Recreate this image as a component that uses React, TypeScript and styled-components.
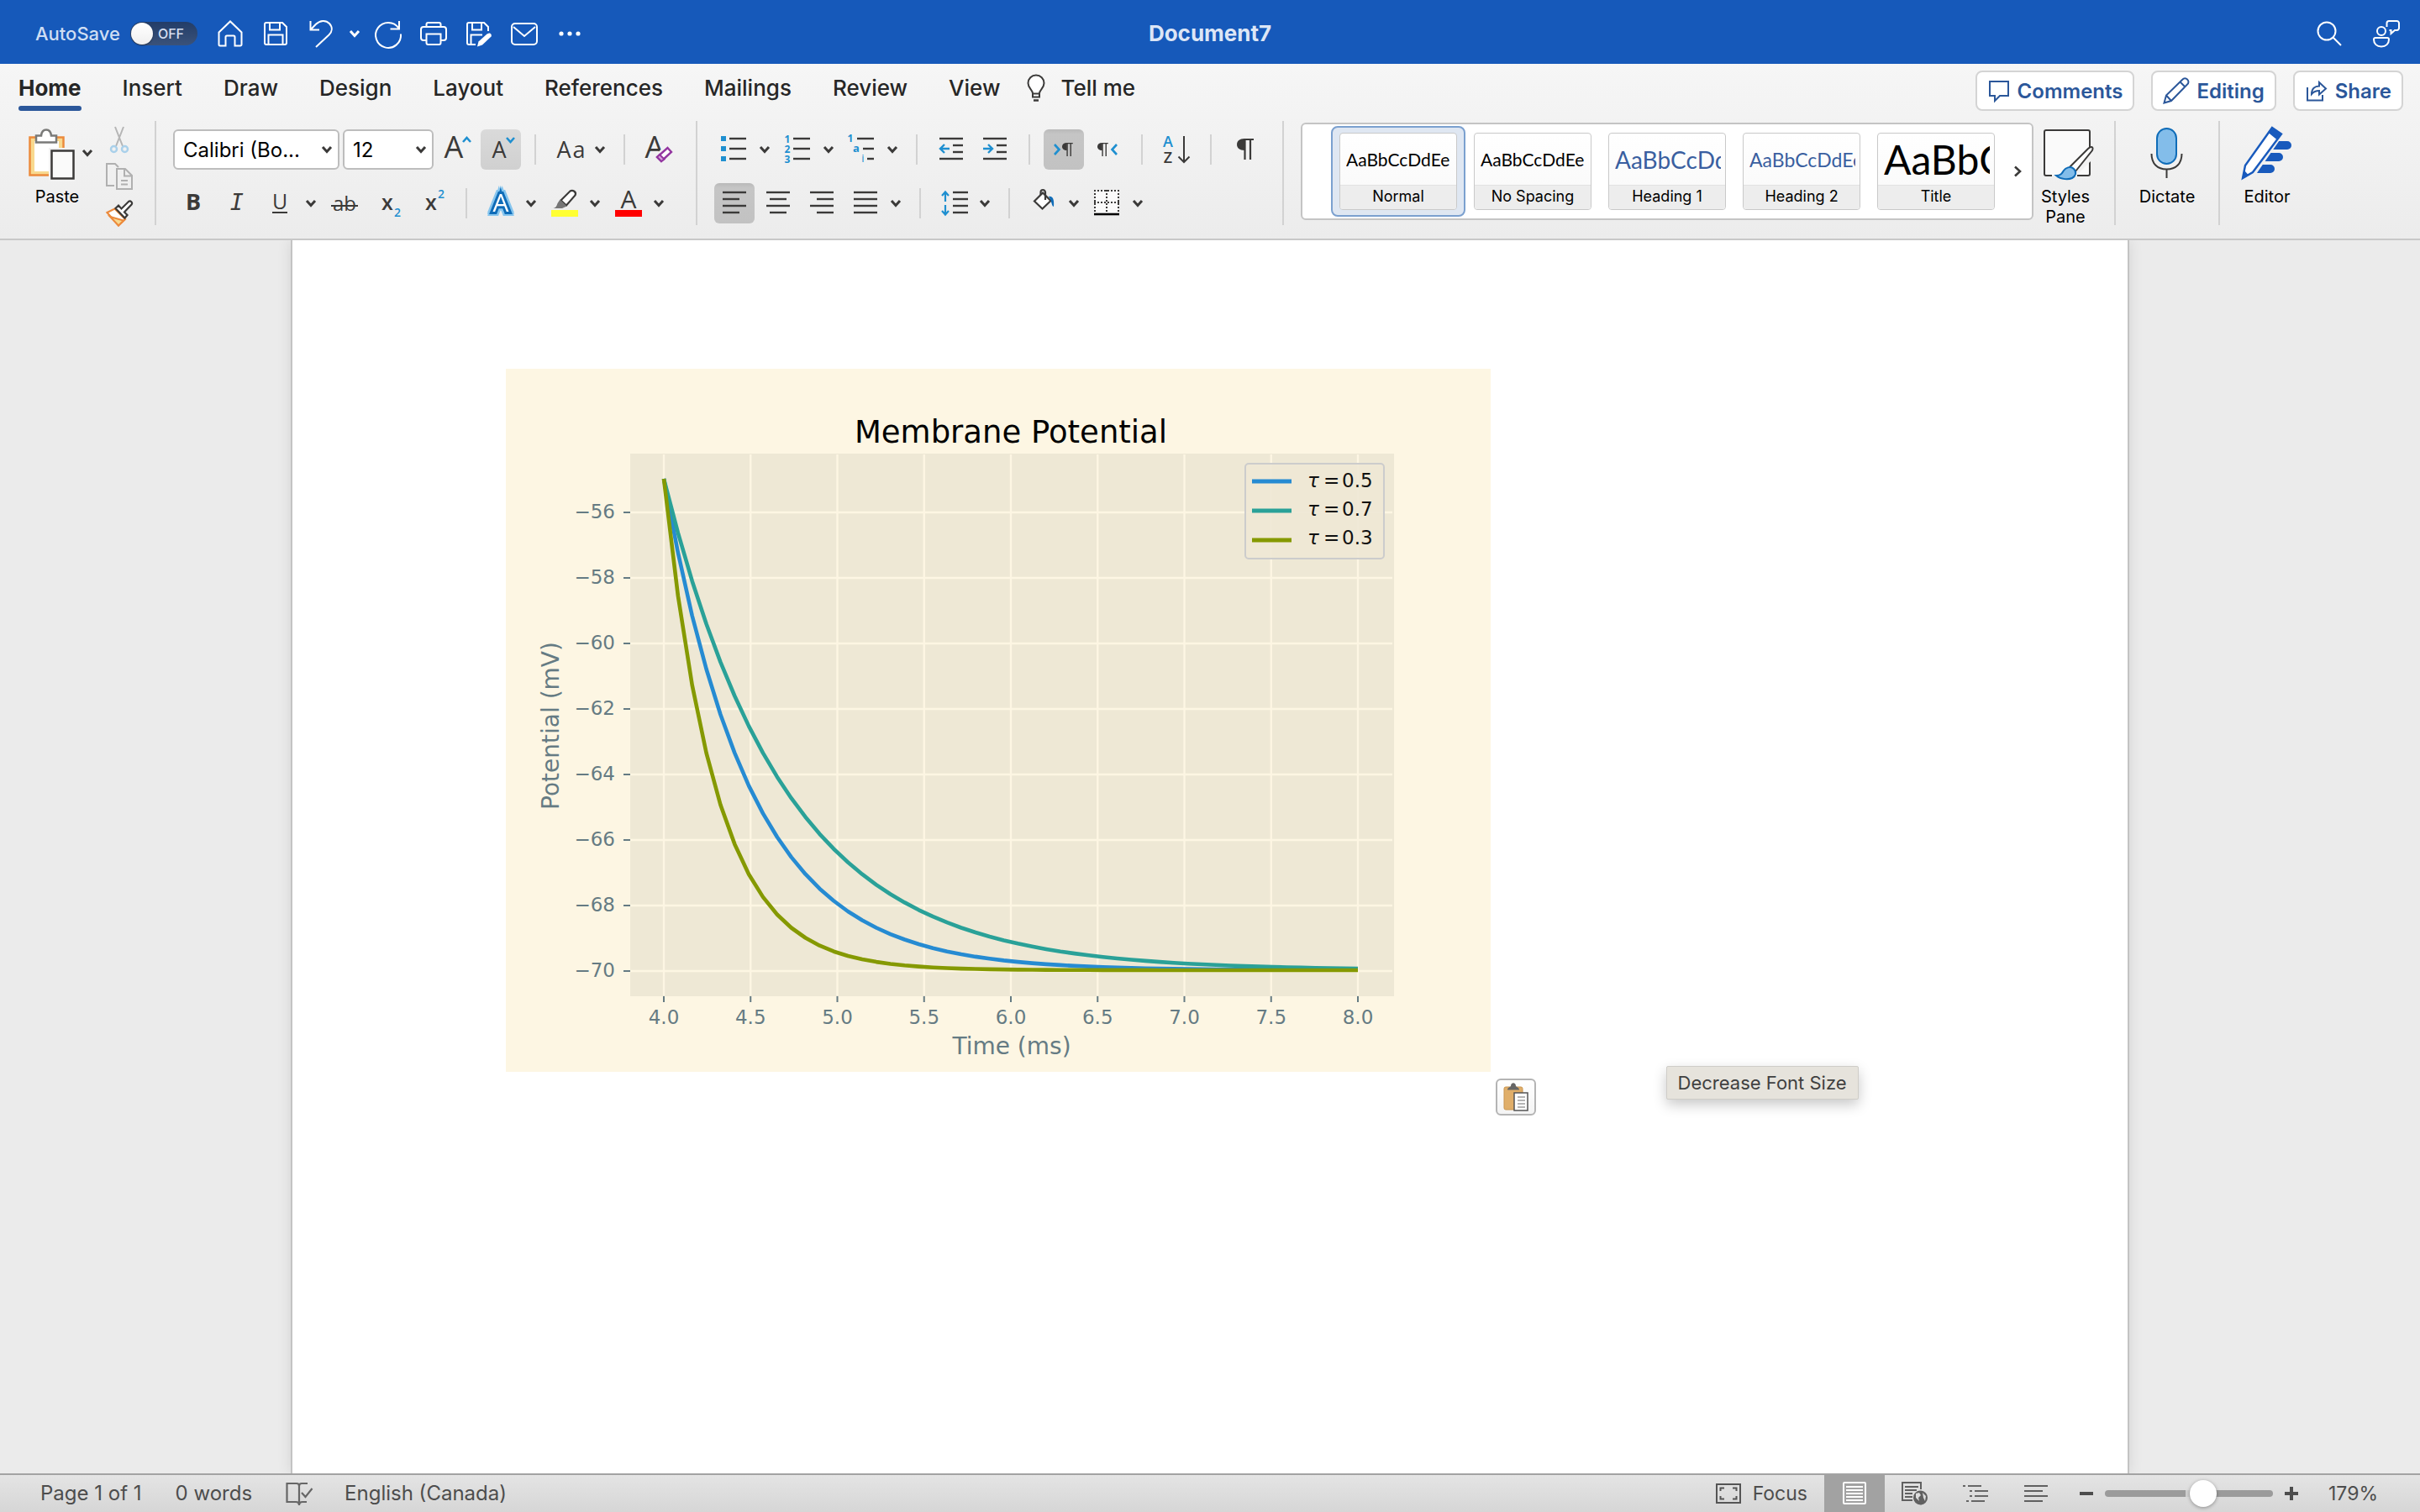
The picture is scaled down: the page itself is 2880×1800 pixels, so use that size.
import React from "react";
import styled, { createGlobalStyle, css } from "styled-components";

const UI = `Inter, "Liberation Sans", sans-serif`;
const INK = "#3b3a39";
const BLUE = "#1e8fd0";
const WORD = "#2b579a";

const GlobalStyle = createGlobalStyle`
  *, *::before, *::after { box-sizing: border-box; }
  body { margin: 0; background: #ebebeb; font-family: ${UI}; }
  button, select, input { font: inherit; color: inherit; }
  svg { display: block; flex: none; overflow: visible; }
  svg text { font-family: "Open Sans", "Noto Sans", sans-serif; }
`;

/* ---------- shell ---------- */

const Window = styled.div`
  display: flex;
  flex-direction: column;
  height: 100vh;
  overflow: hidden;
`;

const TitleBar = styled.header`
  display: grid;
  grid-template-columns: 1fr auto 1fr;
  align-items: center;
  flex: none;
  height: 76px;
  padding: 4px 6px 0;
  background: #1659ba;
  color: #fff;
`;

const BarSide = styled.div<{ $end?: boolean }>`
  display: flex;
  align-items: center;
  justify-content: ${(p) => (p.$end ? "flex-end" : "flex-start")};
`;

const DocTitle = styled.h1`
  margin: 0;
  font-size: 26px;
  font-weight: 700;
  line-height: 32px;
  color: #dce6f6;
`;

const AutoSave = styled.label`
  display: flex;
  align-items: center;
  gap: 12px;
  margin: 0 12px 0 36px;
  font-size: 22px;
  font-weight: 500;
  color: #cfdef3;
`;

const Track = styled.span`
  display: flex;
  align-items: center;
  gap: 6px;
  width: 80px;
  height: 28px;
  padding: 1px;
  border-radius: 14px;
  background: linear-gradient(#233d68, #3a527a);
  font-size: 16px;
  color: #d5dff0;
`;

const Knob = styled.input`
  appearance: none;
  width: 26px;
  height: 26px;
  margin: 0;
  border-radius: 50%;
  background: linear-gradient(#fff, #f0f0f0);
  box-shadow: 0 1px 2px rgba(0, 0, 0, 0.4);
`;

const BarButton = styled.button<{ $size?: "narrow" | "wide" }>`
  display: flex;
  align-items: center;
  justify-content: center;
  width: ${(p) => (p.$size === "narrow" ? 26 : p.$size === "wide" ? 68 : 54)}px;
  height: 40px;
  padding: 0;
  border: 0;
  background: none;
`;

const Ribbon = styled.section`
  flex: none;
  border-bottom: 2px solid #c8c8c8;
  background: linear-gradient(#f6f6f6, #ececec);
`;

const TabRow = styled.div`
  display: flex;
  align-items: flex-start;
  justify-content: space-between;
  height: 68px;
  padding: 8px 20px 0 22px;
`;

const TabBar = styled.div`
  display: flex;
  gap: 32px;
`;

const Tabs = styled.nav`
  display: flex;
  gap: 49px;
`;

const Tab = styled.button<{ $active?: boolean }>`
  display: flex;
  align-items: center;
  gap: 18px;
  height: 48px;
  padding: 0;
  border: 0;
  border-bottom: 6px solid transparent;
  background: none;
  font-size: 26px;
  line-height: 32px;
  font-weight: 500;
  color: #262626;
  white-space: nowrap;
  ${(p) =>
    p.$active &&
    css`
      font-weight: 700;
      position: relative;
      &::after {
        content: "";
        position: absolute;
        inset: 42px 0 auto;
        height: 6px;
        border-radius: 3px;
        background: ${WORD};
      }
    `}
`;

const Actions = styled.div`
  display: flex;
  gap: 20px;
`;

const Action = styled.button`
  display: flex;
  align-items: center;
  gap: 8px;
  height: 48px;
  padding: 0 12px;
  border: 2px solid #d4d4d4;
  border-radius: 8px;
  background: #fff;
  font-size: 24px;
  font-weight: 600;
  color: ${WORD};
`;

const Groups = styled.div`
  display: flex;
  align-items: flex-start;
  padding-bottom: 12px;
  min-height: 140px;
`;

const GroupLine = styled.div`
  flex: none;
  width: 2px;
  height: 124px;
  background: #d2d2d2;
`;

const Clipboard = styled.div`
  display: flex;
  padding: 6px 26px 0 34px;
`;

const PasteStack = styled.div`
  width: 92px;
`;

const PasteRow = styled.div`
  display: flex;
  align-items: center;
  margin-bottom: 8px;
`;

const PasteLabel = styled.span`
  display: block;
  width: 68px;
  font-size: 20px;
  line-height: 24px;
  text-align: center;
`;

const SmallStack = styled.div`
  display: flex;
  flex-direction: column;
  gap: 12px;
`;

const Plain = styled.button`
  display: block;
  padding: 0;
  border: 0;
  background: none;
`;

const Group = styled.div`
  display: flex;
  flex-direction: column;
  gap: 16px;
  padding: 10px 20px 0;
`;

const Row = styled.div`
  display: flex;
  align-items: center;
  gap: 4px;
  height: 48px;
`;

const Split = styled.div`
  display: flex;
`;

const ToolLine = styled.div`
  width: 2px;
  height: 36px;
  margin: 0 12px;
  background: #d2d2d2;
`;

const Tool = styled.button<{ $on?: "soft" | "strong" }>`
  width: 48px;
  height: 48px;
  padding: 0;
  border: 0;
  border-radius: 6px;
  background: ${(p) =>
    p.$on === "strong"
      ? "linear-gradient(#b9b9b9, #c5c5c5 12%, #c2c2c2)"
      : p.$on === "soft"
        ? "linear-gradient(#dadada, #d0d0d0)"
        : "none"};
`;

const ChevronButton = styled.button`
  display: flex;
  align-items: center;
  justify-content: center;
  width: 24px;
  height: 48px;
  padding: 0;
  border: 0;
  background: none;
`;

const SelectBox = styled.label<{ $wide?: boolean }>`
  display: flex;
  align-items: center;
  width: ${(p) => (p.$wide ? 198 : 108)}px;
  height: 48px;
  padding-right: 7px;
  border: 2px solid #bdbdbd;
  border-radius: 6px;
  background: #fff;
`;

const Select = styled.select`
  appearance: none;
  flex: 1;
  min-width: 0;
  height: 100%;
  padding: 0 0 0 10px;
  border: 0;
  background: none;
  font-size: 24px;
  color: #000;
`;

const Gallery = styled.div`
  display: flex;
  height: 116px;
  margin: 2px 0 0 20px;
  padding: 2px 0 2px 34px;
  border: 2px solid #c4c4c4;
  border-radius: 6px;
  background: #fff;
`;

const StyleCell = styled.button<{ $on?: boolean }>`
  width: 160px;
  height: 108px;
  padding: 6px 8px;
  border: 2px solid ${(p) => (p.$on ? "#7ba0cf" : "transparent")};
  border-radius: 8px;
  background: ${(p) => (p.$on ? "#dfe7f2" : "none")};
`;

const StyleCard = styled.span`
  display: flex;
  flex-direction: column;
  height: 92px;
  border: 1px solid #c9c9c9;
  border-radius: 4px;
  background: linear-gradient(#fff, #f8f8f8);
  overflow: hidden;
`;

const Sample = styled.span<{ $size: number; $blue?: boolean }>`
  display: block;
  height: 62px;
  margin: 0 5px 0 7px;
  overflow: hidden;
  font-family: Lato, "Noto Sans", sans-serif;
  font-size: ${(p) => p.$size}px;
  line-height: 62px;
  text-align: left;
  white-space: nowrap;
  color: ${(p) => (p.$blue ? "#3a5fa0" : "#000")};
`;

const SampleName = styled.span`
  height: 30px;
  border-top: 1px solid #e2e2e2;
  background: #ededed;
  font-size: 18px;
  line-height: 26px;
  color: #000;
`;

const GalleryNext = styled.button`
  display: flex;
  align-items: center;
  justify-content: center;
  width: 34px;
  padding: 0;
  border: 0;
  background: none;
`;

const BigButton = styled.button<{ $w: number; $first?: boolean }>`
  display: flex;
  flex-direction: column;
  align-items: center;
  gap: 8px;
  width: ${(p) => p.$w}px;
  margin: 0 20px 0 ${(p) => (p.$first ? 0 : 20)}px;
  padding: 6px 0 0;
  border: 0;
  background: none;
  font-size: 20px;
  line-height: 24px;
  color: #000;
`;

/* ---------- document ---------- */

const Workspace = styled.main`
  flex: 1;
  min-height: 0;
  display: flex;
  justify-content: center;
  background: #ebebeb;
  overflow: hidden;
`;

const Page = styled.article`
  position: relative;
  width: 76%;
  padding: 153px 254px 0;
  border: solid #c3c3c3;
  border-width: 0 2px;
  background: #fff;
  box-shadow: 0 0 16px rgba(0, 0, 0, 0.1);
`;

const Figure = styled.figure`
  position: relative;
  width: 1172px;
  max-width: 100%;
  margin: 0;
`;

const PasteOptions = styled.button`
  position: absolute;
  left: calc(100% + 6px);
  top: calc(100% + 8px);
  display: flex;
  align-items: center;
  justify-content: center;
  width: 48px;
  height: 44px;
  padding: 0;
  border: 2px solid #b4b4b4;
  border-radius: 6px;
  background: linear-gradient(#fff, #f4f4f4);
`;

const Tooltip = styled.div`
  position: absolute;
  left: 1635px;
  top: 983px;
  padding: 0 13px;
  border: 1px solid #cfcdc8;
  border-radius: 2px;
  background: #e6e3dc;
  box-shadow: 0 6px 16px rgba(0, 0, 0, 0.22);
  font-size: 22px;
  line-height: 38px;
  color: #404040;
  white-space: nowrap;
`;

/* ---------- status bar ---------- */

const StatusBar = styled.footer`
  display: flex;
  justify-content: space-between;
  flex: none;
  height: 46px;
  padding: 0 50px 0 48px;
  border-top: 2px solid #a3a3a3;
  background: linear-gradient(#e4e4e4, #d6d6d6);
  line-height: 28px;
  color: #4d4d4d;
`;

const StatusSide = styled.div<{ $end?: boolean }>`
  display: flex;
  align-items: center;
  gap: ${(p) => (p.$end ? 0 : 40)}px;
  font-size: ${(p) => (p.$end ? 23 : 24)}px;
  white-space: nowrap;
`;

const StatusButton = styled.button<{ $on?: boolean }>`
  display: flex;
  align-items: center;
  justify-content: center;
  gap: 14px;
  width: ${(p) => (p.$on !== undefined ? "72px" : "auto")};
  height: 44px;
  padding: 0;
  border: 0;
  background: ${(p) => (p.$on ? "#a2a2a2" : "none")};
`;

const FocusWrap = styled.div`
  margin-right: 20px;
`;

const ZoomControls = styled.div`
  display: flex;
  align-items: center;
  gap: 14px;
  margin: 0 36px 0 16px;
`;

const ZoomRange = styled.input`
  appearance: none;
  width: 200px;
  height: 44px;
  margin: 0;
  background: none;
  &::-webkit-slider-runnable-track {
    height: 8px;
    border-radius: 4px;
    background: linear-gradient(90deg, #9b9b9b 96px, #d0d0d0 96px 102px, #9b9b9b 102px);
  }
  &::-webkit-slider-thumb {
    appearance: none;
    width: 32px;
    height: 32px;
    margin-top: -12px;
    border-radius: 50%;
    background: #fff;
    box-shadow: 0 1px 4px rgba(0, 0, 0, 0.35);
  }
`;

/* ---------- icons ---------- */

const Glyph = ({ w = 48, h = 48, sw = 2, c = INK, children }: any) => (
  <svg width={w} height={h} viewBox={`0 0 ${w} ${h}`} fill="none" stroke={c} strokeWidth={sw} aria-hidden="true">
    {children}
  </svg>
);

const T = ({ x, y, s, w = 400, c = INK, children, ...rest }: any) => (
  <text x={x} y={y} fontSize={s} fontWeight={w} fill={c} stroke="none" textAnchor="middle" {...rest}>
    {children}
  </text>
);

const EffectLetter = styled.text`
  fill: #fff;
  stroke: #0f6cb8;
  stroke-width: 6px;
  paint-order: stroke;
  text-anchor: middle;
  filter: drop-shadow(2px 0 0 #86c5ee) drop-shadow(-2px 0 0 #86c5ee) drop-shadow(0 2px 0 #86c5ee)
    drop-shadow(0 -2px 0 #86c5ee);
`;

const Chevron = ({ c = INK }: { c?: string }) => (
  <Glyph w={12} h={8} sw={3} c={c}>
    <path d="M1 1l5 5.5L11 1" />
  </Glyph>
);

const More = ({ label }: { label: string }) => (
  <ChevronButton aria-label={label}>
    <Chevron />
  </ChevronButton>
);

const Lines = ({ rows }: { rows: [number, number, number][] }) => (
  <>
    {rows.map(([x1, x2, y]) => (
      <path key={`${x1}-${y}`} d={`M${x1} ${y}H${x2}`} strokeWidth={2.4} />
    ))}
  </>
);

const Pilcrow = ({ x, y, k = 1 }: { x: number; y: number; k?: number }) => (
  <g transform={`translate(${x} ${y}) scale(${k})`}>
    <path d="M9 0C3 0 0 3 0 7s3 7 9 7z" fill={INK} stroke="none" />
    <path d="M8 1h12M9.500 0v25M16 0v25" strokeWidth={2.2} />
  </g>
);

const HomeIcon = () => (
  <Glyph w={32} h={32} c="#fff">
    <path d="M2.500 14.500 16 1.500l13.500 13V29a1.500 1.500 0 0 1-1.500 1.500h-6.500V20a1.500 1.500 0 0 0-1.500-1.500h-8a1.500 1.500 0 0 0-1.500 1.500v10.500H4A1.500 1.500 0 0 1 2.500 29z" />
  </Glyph>
);
const SaveIcon = () => (
  <Glyph w={32} h={32} c="#fff">
    <path d="M5 3h19l5 5v19a2 2 0 0 1-2 2H5a2 2 0 0 1-2-2V5a2 2 0 0 1 2-2zM9 3v8.500h12V3M7.500 29V17.500h17V29" />
  </Glyph>
);
const UndoIcon = () => (
  <Glyph w={32} h={32} c="#fff">
    <path d="M3.500 1v10.500H14M3.500 11.500 10 4.800C15-.2 22-.3 26 4s3.500 9.500-.5 13.500L10 32" />
  </Glyph>
);
const RedoIcon = () => (
  <Glyph w={32} h={32} c="#fff">
    <path d="M29 1v9.500H18.500M28.500 9.500A15 15 0 1 0 31 16.500" />
  </Glyph>
);
const PrintIcon = () => (
  <Glyph w={32} h={32} c="#fff">
    <path d="M7.500 8V5a2 2 0 0 1 2-2h13a2 2 0 0 1 2 2v3M7.500 24H4a3 3 0 0 1-3-3V11a3 3 0 0 1 3-3h24a3 3 0 0 1 3 3v10a3 3 0 0 1-3 3h-3.500M7.500 16.500h17V27a2 2 0 0 1-2 2h-13a2 2 0 0 1-2-2z" />
  </Glyph>
);
const SavePenIcon = () => (
  <Glyph w={32} h={32} c="#fff">
    <path d="M12 29H4a2 2 0 0 1-2-2V5a2 2 0 0 1 2-2h18l5 5v5M8 3v8.500h11V3M6.500 29V17.500H20" />
    <path d="M28 15.500c2 0 3.500 2 2.500 4L20 29.500l-6 2 1.500-6 10-9z" fill="#fff" stroke="none" />
  </Glyph>
);
const MailIcon = () => (
  <Glyph w={32} h={32} c="#fff">
    <rect x="1" y="4" width="30" height="25" rx="4" />
    <path d="m3 8 13 11L29 8" />
  </Glyph>
);
const DotsIcon = () => (
  <Glyph w={32} h={32} c="#fff">
    {[6, 16, 26].map((x) => (
      <circle key={x} cx={x} cy="16" r="2.600" fill="#fff" stroke="none" />
    ))}
  </Glyph>
);
const SearchIcon = () => (
  <Glyph w={32} h={32} c="#fff">
    <circle cx="13" cy="13" r="10.500" />
    <path d="m20.500 20.500 9.500 9.500" />
  </Glyph>
);
const PersonIcon = () => (
  <Glyph w={32} h={32} c="#fff">
    <circle cx="10" cy="13" r="5" />
    <path d="M3 21h14a2 2 0 0 1 2 2c0 5-3.500 8.500-9 8.500S1 28 1 23a2 2 0 0 1 2-2zM19 1h9.500a2.500 2.500 0 0 1 2.500 2.500v6a2.500 2.500 0 0 1-2.500 2.500H26l-4.500 4v-4H19.500" />
    <path d="M16.500 8V3.500A2.500 2.500 0 0 1 19 1" />
  </Glyph>
);

const BulbIcon = () => (
  <Glyph w={22} h={32}>
    <path d="M7 22c0-4-5.500-6-5.500-12a9.500 9.500 0 0 1 19 0c0 6-5.500 8-5.500 12v4.500H7zM7 22.500h8" fill="#fff" />
    <path d="M8 30.500h6" strokeWidth={2.5} />
  </Glyph>
);
const CommentIcon = () => (
  <Glyph w={28} h={32} c={WORD}>
    <path d="M3 5h22v17H15l-6 6v-6H3z" />
  </Glyph>
);
const PencilIcon = () => (
  <Glyph w={32} h={32} c={WORD}>
    <path d="m1.500 30.500 2.500-9L23.500 2.500a3.600 3.600 0 0 1 5.500 0 3.800 3.800 0 0 1 0 6L10 28zM4 21.500l6 6.500M20.500 5.500l6 6" />
  </Glyph>
);
const ShareIcon = () => (
  <Glyph w={28} h={32} c={WORD}>
    <path d="M3 12v15.500h18V21" />
    <path d="M8 20c0-6.500 4-9.500 9-9.500V6l8 7.500-8 7V16c-4 0-6.500 1-9 4z" />
  </Glyph>
);

const PasteIcon = () => (
  <Glyph w={58} h={64}>
    <rect x="1.500" y="13.500" width="40" height="45" fill="#f8d98f" stroke="#ec8a3c" strokeWidth={2.5} />
    <path d="M7 18h29v36H7z" fill="#fff" stroke="none" />
    <path d="M9 19.500v-8h6c.5-4.500 3-7 6-7s5.500 2.500 6 7h6v8z" fill="#fff" stroke="#7a7a78" strokeWidth={2.5} />
    <path d="M24 26h32v40H24z" fill="#f2f2f2" stroke="none" />
    <rect x="27.500" y="29.500" width="26" height="33" fill="#fafafa" strokeWidth={2.5} />
  </Glyph>
);
const CutIcon = () => (
  <Glyph w={32} h={32} c="#b5b5b5">
    <path d="m11 1 9 23M21 1l-9 23" />
    <circle cx="9.500" cy="27.500" r="3.500" stroke="#a9d0ea" strokeWidth={2.5} />
    <circle cx="22.500" cy="27.500" r="3.500" stroke="#a9d0ea" strokeWidth={2.5} />
  </Glyph>
);
const CopyIcon = () => (
  <Glyph w={32} h={32} c="#b0b0b0">
    <path d="M10 27H1V1h10l4 4" />
    <path d="M13 7h10l8 8v16H13zM22 7v8.500h9M18 21h8M18 25.500h8" />
  </Glyph>
);
const PainterIcon = () => (
  <Glyph w={32} h={32}>
    <path d="m1.500 15 9-4.500L23 23l-8 7.500z" fill="#fff" stroke="#ec8a3c" strokeWidth={2.2} />
    <path d="m5 20 16 4.500-6 6z" fill="#f8d98f" stroke="#ec8a3c" strokeWidth={2} />
    <path d="M11.500 10 22.500 21.500l3-3.500-3.500-3.500 8.500-9a2.500 2.500 0 0 0-3.500-3.500l-8.500 8.500L15 6.500z" fill="#fff" strokeWidth={2.2} />
  </Glyph>
);

const AlignGlyph = ({ s }: { s: [number, number] }) => (
  <Glyph>
    <Lines rows={[[10, 38, 11], [s[0], s[1], 19], [10, 38, 27], [s[0], s[1], 35]]} />
  </Glyph>
);

const SEP = <ToolLine />;

/* ---------- chart ---------- */

const px = (t: number) => 188 + (t - 4) * 206.5;
const py = (v: number) => 716 - (v + 70) * 39;
const SERIES = [
  { tau: 0.5, color: "#268bd2" },
  { tau: 0.7, color: "#2aa198" },
  { tau: 0.3, color: "#859900" },
];
const X_TICKS = [4, 4.5, 5, 5.5, 6, 6.5, 7, 7.5, 8];
const Y_TICKS = [-56, -58, -60, -62, -64, -66, -68, -70];
const curve = (tau: number) =>
  Array.from({ length: 50 }, (_, i) => {
    const t = 4 + (i * 4) / 49;
    return `${px(t).toFixed(1)},${py(-70 + 15 * Math.exp(-(t - 4) / tau)).toFixed(1)}`;
  }).join(" ");

const ChartSvg = styled.svg`
  width: 100%;
  height: auto;
  background: #fdf6e3;
  text {
    font-family: "DejaVu Sans", sans-serif;
  }
`;

const Chart = () => (
  <ChartSvg viewBox="0 0 1172 837" role="img" aria-label="Membrane Potential">
    <rect x="148" y="101" width="909" height="646" fill="#eee8d5" />
    <g stroke="#fdf6e3" strokeWidth="2.400">
      {X_TICKS.map((t) => (
        <path key={t} d={`M${px(t)} 102V746`} />
      ))}
      {Y_TICKS.map((v) => (
        <path key={v} d={`M148 ${py(v) + 1}H1055`} />
      ))}
    </g>
    <g stroke="#657b83" strokeWidth="2">
      {X_TICKS.map((t) => (
        <path key={t} d={`M${px(t)} 747v7`} />
      ))}
      {Y_TICKS.map((v) => (
        <path key={v} d={`M140 ${py(v) + 1}h8`} />
      ))}
    </g>
    {SERIES.map((s) => (
      <polyline key={s.tau} points={curve(s.tau)} fill="none" stroke={s.color} strokeWidth="4.600" strokeLinejoin="round" />
    ))}
    <g fill="#657b83" fontSize="23">
      {X_TICKS.map((t) => (
        <text key={t} x={px(t)} y="780" textAnchor="middle">
          {t.toFixed(1)}
        </text>
      ))}
      {Y_TICKS.map((v) => (
        <text key={v} x="130" y={py(v) + 8} textAnchor="end">
          {`−${-v}`}
        </text>
      ))}
    </g>
    <text x="602" y="816" fontSize="28" fill="#657b83" textAnchor="middle">
      Time (ms)
    </text>
    <text transform="translate(63 425) rotate(-90)" fontSize="28" fill="#657b83" textAnchor="middle">
      Potential (mV)
    </text>
    <text x="601" y="88" fontSize="37" fill="#000" textAnchor="middle">
      Membrane Potential
    </text>
    <rect x="880" y="113" width="165" height="113" rx="4" fill="#eee8d5" fillOpacity="0.900" stroke="#ccc" strokeWidth="2" />
    {SERIES.map((s, i) => (
      <g key={s.tau}>
        <path d={`M888 ${134 + i * 35}h47`} stroke={s.color} strokeWidth="5" />
        <text y={141 + i * 34} fontSize="23" fill="#111">
          <tspan x="954" fontStyle="oblique">
            τ
          </tspan>
          <tspan x="973">=</tspan>
          <tspan x="995">{s.tau.toFixed(1)}</tspan>
        </text>
      </g>
    ))}
  </ChartSvg>
);

/* ---------- ribbon parts ---------- */

const TABS = ["Home", "Insert", "Draw", "Design", "Layout", "References", "Mailings", "Review", "View"];

const STYLES = [
  { name: "Normal", size: 21 },
  { name: "No Spacing", size: 21 },
  { name: "Heading 1", size: 28, blue: true },
  { name: "Heading 2", size: 23, blue: true },
  { name: "Title", size: 48 },
];

const FontGroup = () => (
  <Group>
    <Row>
      <SelectBox $wide>
        <Select aria-label="Font">
          <option>Calibri (Bo...</option>
        </Select>
        <Chevron />
      </SelectBox>
      <SelectBox>
        <Select aria-label="Font size">
          <option>12</option>
        </Select>
        <Chevron />
      </SelectBox>
      <Tool aria-label="Increase Font Size">
        <Glyph>
          <T x={20} y={34} s={36}>A</T>
          <path d="m31 15 4.500-5 4.500 5" stroke={BLUE} strokeWidth={2.6} />
        </Glyph>
      </Tool>
      <Tool $on="soft" aria-label="Decrease Font Size">
        <Glyph>
          <T x={22} y={34} s={27}>A</T>
          <path d="m31 10 4.500 5 4.500-5" stroke={BLUE} strokeWidth={2.6} />
        </Glyph>
      </Tool>
      {SEP}
      <Split>
        <Tool aria-label="Change Case">
          <Glyph>
            <T x={17} y={34} s={27}>A</T>
            <T x={35} y={34} s={27}>a</T>
          </Glyph>
        </Tool>
        <More label="Change Case options" />
      </Split>
      {SEP}
      <Tool aria-label="Clear Formatting">
        <Glyph>
          <T x={19} y={34} s={36}>A</T>
          <path d="m34 17 10 10-16 16-11-10z" fill="#f1f1f1" stroke="none" />
          <path d="m34.500 22 4.500 5-12 11-5-5z" fill="#fff" stroke="#9335a0" strokeWidth={2.4} />
          <path d="m25 30 5.500 5.500-3.500 2.500-5-5z" fill="#d7a3dc" stroke="#9335a0" />
        </Glyph>
      </Tool>
    </Row>
    <Row>
      <Tool aria-label="Bold">
        <Glyph>
          <T x={24} y={32} s={27} w={700}>B</T>
        </Glyph>
      </Tool>
      <Tool aria-label="Italic">
        <Glyph>
          <T x={24} y={32} s={27} style={{ fontFamily: "DejaVu Sans Mono, monospace", fontStyle: "oblique" }}>I</T>
        </Glyph>
      </Tool>
      <Split>
        <Tool aria-label="Underline">
          <Glyph>
            <T x={23} y={31} s={25}>U</T>
            <path d="M14 35h18" />
          </Glyph>
        </Tool>
        <More label="Underline options" />
      </Split>
      <Tool aria-label="Strikethrough">
        <Glyph>
          <T x={24} y={33} s={24}>ab</T>
          <path d="M8 27h32" />
        </Glyph>
      </Tool>
      <Tool aria-label="Subscript">
        <Glyph>
          <T x={23} y={32} s={25} w={600}>x</T>
          <T x={35} y={40} s={14} w={600} c={BLUE}>2</T>
        </Glyph>
      </Tool>
      <Tool aria-label="Superscript">
        <Glyph>
          <T x={23} y={32} s={25} w={600}>x</T>
          <T x={35} y={18} s={14} w={600} c={BLUE}>2</T>
        </Glyph>
      </Tool>
      {SEP}
      <Split>
        <Tool aria-label="Text Effects">
          <Glyph>
            <EffectLetter x={24} y={34} fontSize={30}>A</EffectLetter>
          </Glyph>
        </Tool>
        <More label="Text Effects options" />
      </Split>
      <Split>
        <Tool aria-label="Text Highlight Color">
          <Glyph>
            <path d="M8 32h32v8H8z" fill="#ffff33" stroke="none" />
            <path d="M19.500 20.500 30.500 9.500c3-2 8 1 6 5L26 26.500z" fill="#fff" strokeWidth={2.2} />
            <path d="m18.500 19.500 8 8-5.500 2.500H10.500c3-1 4-2.500 5-6z" fill="#767676" stroke="none" />
          </Glyph>
        </Tool>
        <More label="Highlight options" />
      </Split>
      <Split>
        <Tool aria-label="Font Color">
          <Glyph>
            <path d="M8 32h32v8H8z" fill="#f00" stroke="none" />
            <T x={24} y={30} s={30}>A</T>
          </Glyph>
        </Tool>
        <More label="Font Color options" />
      </Split>
    </Row>
  </Group>
);

const ParagraphGroup = () => (
  <Group>
    <Row>
      <Split>
        <Tool aria-label="Bullets">
          <Glyph>
            <path d="M8 8h6v6H8zM8 20h6v6H8zM8 32h6v6H8z" fill={BLUE} stroke="none" />
            <Lines rows={[[18, 38, 11], [18, 38, 23], [18, 38, 35]]} />
          </Glyph>
        </Tool>
        <More label="Bullets options" />
      </Split>
      <Split>
        <Tool aria-label="Numbering">
          <Glyph>
            {[1, 2, 3].map((n) => (
              <T key={n} x={11} y={n * 12 + 3.5} s={12} w={700} c={BLUE}>{n}</T>
            ))}
            <Lines rows={[[18, 38, 11], [18, 38, 23], [18, 38, 35]]} />
          </Glyph>
        </Tool>
        <More label="Numbering options" />
      </Split>
      <Split>
        <Tool aria-label="Multilevel List">
          <Glyph>
            <T x={10} y={15} s={12} w={700} c={BLUE}>1</T>
            <T x={17} y={27} s={13} w={700} c={BLUE}>a</T>
            <T x={25} y={39} s={13} c={BLUE}>i</T>
            <Lines rows={[[18, 38, 11], [25, 38, 23], [30, 38, 35]]} />
          </Glyph>
        </Tool>
        <More label="Multilevel List options" />
      </Split>
      {SEP}
      <Tool aria-label="Decrease Indent">
        <Glyph>
          <Lines rows={[[10, 38, 11], [26, 38, 19], [26, 38, 27], [10, 38, 35]]} />
          <path d="M22 23H11M16 18l-5 5 5 5" stroke={BLUE} strokeWidth={2.4} />
        </Glyph>
      </Tool>
      <Tool aria-label="Increase Indent">
        <Glyph>
          <Lines rows={[[10, 38, 11], [26, 38, 19], [26, 38, 27], [10, 38, 35]]} />
          <path d="M10 23h11M16 18l5 5-5 5" stroke={BLUE} strokeWidth={2.4} />
        </Glyph>
      </Tool>
      {SEP}
      <Tool $on="strong" aria-label="Left-to-right text direction">
        <Glyph>
          <path d="m13 18 5.500 6-5.500 6" stroke={BLUE} strokeWidth={2.6} />
          <Pilcrow x={22} y={16} k={0.64} />
        </Glyph>
      </Tool>
      <Tool aria-label="Right-to-left text direction">
        <Glyph>
          <Pilcrow x={12} y={16} k={0.64} />
          <path d="m35 18-5.500 6 5.500 6" stroke={BLUE} strokeWidth={2.6} />
        </Glyph>
      </Tool>
      {SEP}
      <Tool aria-label="Sort">
        <Glyph>
          <T x={14} y={21} s={18} w={600} c={BLUE}>A</T>
          <T x={14} y={40} s={18} w={600}>Z</T>
          <path d="M33 8v31M26.500 32.500 33 39l6.500-6.500" />
        </Glyph>
      </Tool>
      {SEP}
      <Tool aria-label="Show nonprinting characters">
        <Glyph>
          <Pilcrow x={14} y={11} />
        </Glyph>
      </Tool>
    </Row>
    <Row>
      <Tool $on="strong" aria-label="Align Left"><AlignGlyph s={[10, 30]} /></Tool>
      <Tool aria-label="Center"><AlignGlyph s={[14, 34]} /></Tool>
      <Tool aria-label="Align Right"><AlignGlyph s={[18, 38]} /></Tool>
      <Split>
        <Tool aria-label="Justify"><AlignGlyph s={[10, 38]} /></Tool>
        <More label="Justify options" />
      </Split>
      {SEP}
      <Split>
        <Tool aria-label="Line Spacing">
          <Glyph>
            <path d="M13 22V10.500M9 15l4-4.500 4 4.500M13 26v11.500M9 33l4 4.500 4-4.500" stroke={BLUE} strokeWidth={2.2} />
            <Lines rows={[[22, 40, 11], [22, 40, 19], [22, 40, 27], [22, 40, 35]]} />
          </Glyph>
        </Tool>
        <More label="Line Spacing options" />
      </Split>
      {SEP}
      <Split>
        <Tool aria-label="Shading">
          <Glyph>
            <path d="M8 34h32v6H8z" fill="#ededed" stroke="none" />
            <path d="M23 11.500 32.500 21l-10 9.500-9.500-9z" fill="#fff" strokeWidth={2.2} />
            <path d="M20.500 14v-3c0-4 5-4 5.500 0v9" strokeWidth={2.2} />
            <path d="M30 16c4-1 7 2 6 12-3-1-2-7-6-12z" fill="#0f6cb8" stroke="none" />
          </Glyph>
        </Tool>
        <More label="Shading options" />
      </Split>
      <Split>
        <Tool aria-label="Borders">
          <Glyph>
            <path d="M9 9h28v28H9z" fill="#fafafa" stroke="none" />
            <path d="M8 9h30M8 23h30M9 8v28M23 8v28M37 8v28" strokeDasharray="2 2" />
            <path d="M8 37h30" stroke="#000" strokeWidth={2.6} />
          </Glyph>
        </Tool>
        <More label="Borders options" />
      </Split>
    </Row>
  </Group>
);

export default function App() {
  return (
    <Window>
      <GlobalStyle />
      <TitleBar>
        <BarSide>
          <AutoSave>
            AutoSave
            <Track>
              <Knob type="checkbox" />
              OFF
            </Track>
          </AutoSave>
          <BarButton aria-label="Home"><HomeIcon /></BarButton>
          <BarButton aria-label="Save"><SaveIcon /></BarButton>
          <BarButton aria-label="Undo"><UndoIcon /></BarButton>
          <BarButton $size="narrow" aria-label="Undo options"><Chevron c="#fff" /></BarButton>
          <BarButton aria-label="Redo"><RedoIcon /></BarButton>
          <BarButton aria-label="Print"><PrintIcon /></BarButton>
          <BarButton aria-label="Save as"><SavePenIcon /></BarButton>
          <BarButton aria-label="Mail"><MailIcon /></BarButton>
          <BarButton aria-label="More"><DotsIcon /></BarButton>
        </BarSide>
        <DocTitle>Document7</DocTitle>
        <BarSide $end>
          <BarButton $size="wide" aria-label="Search"><SearchIcon /></BarButton>
          <BarButton $size="wide" aria-label="Account"><PersonIcon /></BarButton>
        </BarSide>
      </TitleBar>

      <Ribbon>
        <TabRow>
          <TabBar>
            <Tabs>
              {TABS.map((t) => (
                <Tab key={t} $active={t === "Home"}>{t}</Tab>
              ))}
            </Tabs>
            <Tab><BulbIcon />Tell me</Tab>
          </TabBar>
          <Actions>
            <Action><CommentIcon />Comments</Action>
            <Action><PencilIcon />Editing</Action>
            <Action><ShareIcon />Share</Action>
          </Actions>
        </TabRow>
        <Groups>
          <Clipboard>
            <PasteStack>
              <PasteRow>
                <Plain aria-labelledby="paste-label"><PasteIcon /></Plain>
                <More label="Paste options" />
              </PasteRow>
              <PasteLabel id="paste-label">Paste</PasteLabel>
            </PasteStack>
            <SmallStack>
              <Plain aria-label="Cut"><CutIcon /></Plain>
              <Plain aria-label="Copy"><CopyIcon /></Plain>
              <Plain aria-label="Format Painter"><PainterIcon /></Plain>
            </SmallStack>
          </Clipboard>
          <GroupLine />
          <FontGroup />
          <GroupLine />
          <ParagraphGroup />
          <GroupLine />
          <Gallery>
            {STYLES.map((s) => (
              <StyleCell key={s.name} $on={s.name === "Normal"}>
                <StyleCard>
                  <Sample $size={s.size} $blue={s.blue}>AaBbCcDdEe</Sample>
                  <SampleName>{s.name}</SampleName>
                </StyleCard>
              </StyleCell>
            ))}
            <GalleryNext aria-label="More styles">
              <Glyph w={10} h={14} sw={2.6}><path d="m2 1.500 6 5.500-6 5.500" /></Glyph>
            </GalleryNext>
          </Gallery>
          <BigButton $w={76} $first>
            <Glyph w={72} h={64}>
              <path d="M20 59H13a2 2 0 0 1-2-2V7a2 2 0 0 1 2-2h50a2 2 0 0 1 2 2v50a2 2 0 0 1-2 2H50" fill="#fafafa" />
              <path d="M71 22 62 27 42 50l8 8 18-18z" fill="#f2f2f2" stroke="none" />
              <path d="m41 49 22-22c3-3 7-3 5 2L48 54" fill="#fff" />
              <path d="M25 59c6 0 7-3 9-6s8-6 12-2 2 9-2 11-13 2-19-3z" fill="#83bdea" stroke="#0f6cb8" />
            </Glyph>
            Styles Pane
          </BigButton>
          <GroupLine />
          <BigButton $w={82}>
            <Glyph w={64} h={64}>
              <rect x="20" y="3" width="23" height="42" rx="11.500" fill="#83bdea" stroke="#0f6cb8" />
              <path d="M13.500 33c0 12 7 18.500 18 18.500s18-6.500 18-18.500M31.500 51.500V62" />
            </Glyph>
            Dictate
          </BigButton>
          <GroupLine />
          <BigButton $w={72}>
            <Glyph w={64} h={64} c="#185abd">
              <path d="M34 23h22M27 37h19M21 51h15" strokeWidth={10} strokeLinecap="round" />
              <path d="M39 1 50 9 16 58 2 63 6 44z" fill="#f4f4f4" stroke="#f1f1f1" strokeWidth={4} />
              <path d="M38 2 49 9.500 15 55 3 62 6 47z" fill="#fff" strokeWidth={2.4} />
              <path d="m38 1 11 9-5 6.500-11-9zM5 53l5 5.500L2 63z" fill="#185abd" stroke="none" />
            </Glyph>
            Editor
          </BigButton>
        </Groups>
      </Ribbon>

      <Workspace>
        <Page>
          <Figure>
            <Chart />
            <PasteOptions aria-label="Paste Options">
              <Glyph w={32} h={34}>
                <rect x="2" y="5" width="22" height="27" rx="2" fill="#e0ae69" stroke="#c99550" strokeWidth={1} />
                <path d="M6 8.500c0-3 3-3 4-4.500 0-5 6-5 6 0 1 1.500 4 1.500 4 4.500z" fill="#666" stroke="none" />
                <rect x="14" y="12" width="16" height="21" fill="#fff" stroke="#555" strokeWidth={1.5} />
                <path d="M18 17h9M18 21h9M18 25h9M18 29h9" stroke="#b5b5b5" strokeWidth={1.8} />
              </Glyph>
            </PasteOptions>
          </Figure>
          <Tooltip role="tooltip">Decrease Font Size</Tooltip>
        </Page>
      </Workspace>

      <StatusBar>
        <StatusSide>
          <span>Page 1 of 1</span>
          <span>0 words</span>
          <Glyph w={30} h={32} c="#666" sw={2.2}>
            <path d="M16 7c0-2-1-3-3-3H1.500v22H12c2 0 4 1 4 4 0-3 2-4 4-4h5M16 7v22M16 7c0-2 1-3 3-3h7M19 15l4.500 5 8-10" />
          </Glyph>
          <span>English (Canada)</span>
        </StatusSide>
        <StatusSide $end>
          <FocusWrap>
            <StatusButton>
              <Glyph w={30} h={24} c="#555">
                <path d="M1 1h28v22H1zM5.500 9V5.500H10M20 5.500h4.500V9M24.500 15v3.500H20M10 18.500H5.500V15" />
              </Glyph>
              Focus
            </StatusButton>
          </FocusWrap>
          <StatusButton $on aria-label="Print Layout">
            <Glyph w={28} h={28} c="#fff">
              <rect x="1" y="1" width="26" height="25" rx="1" />
              <path d="M4 6h20M4 10h20M4 14h20M4 18h20M4 22h20" />
            </Glyph>
          </StatusButton>
          <StatusButton $on={false} aria-label="Web Layout">
            <Glyph w={32} h={28} c="#606060">
              <path d="M13 22H1V1h22v8M4 6h16M4 10h14M4 14h9M4 18h9" />
              <circle cx="22.500" cy="19" r="8.500" fill="#606060" stroke="none" />
              <path d="m17 14 4-1 2 3-3 3 1 4-4-4zM25 13l4 4-1 6-2-4z" fill="#ddd" stroke="none" />
            </Glyph>
          </StatusButton>
          <StatusButton $on={false} aria-label="Outline">
            <Glyph w={30} h={24} c="#666">
              <path d="M0 3h3M6 3h16M8 9h3M14 9h16M8 15h3M14 15h16M4 21h3M10 21h16" />
            </Glyph>
          </StatusButton>
          <StatusButton $on={false} aria-label="Draft">
            <Glyph w={30} h={24} c="#606060">
              <path d="M1 3h28M1 9h22M1 15h28M1 21h22" />
            </Glyph>
          </StatusButton>
          <ZoomControls>
            <Plain aria-label="Zoom out">
              <Glyph w={16} h={16} c="#4d4d4d" sw={4}><path d="M0 8h16" /></Glyph>
            </Plain>
            <ZoomRange type="range" aria-label="Zoom" min={0} max={100} defaultValue={60} />
            <Plain aria-label="Zoom in">
              <Glyph w={16} h={16} c="#4d4d4d" sw={4}><path d="M0 8h16M8 0v16" /></Glyph>
            </Plain>
          </ZoomControls>
          <span>179%</span>
        </StatusSide>
      </StatusBar>
    </Window>
  );
}
